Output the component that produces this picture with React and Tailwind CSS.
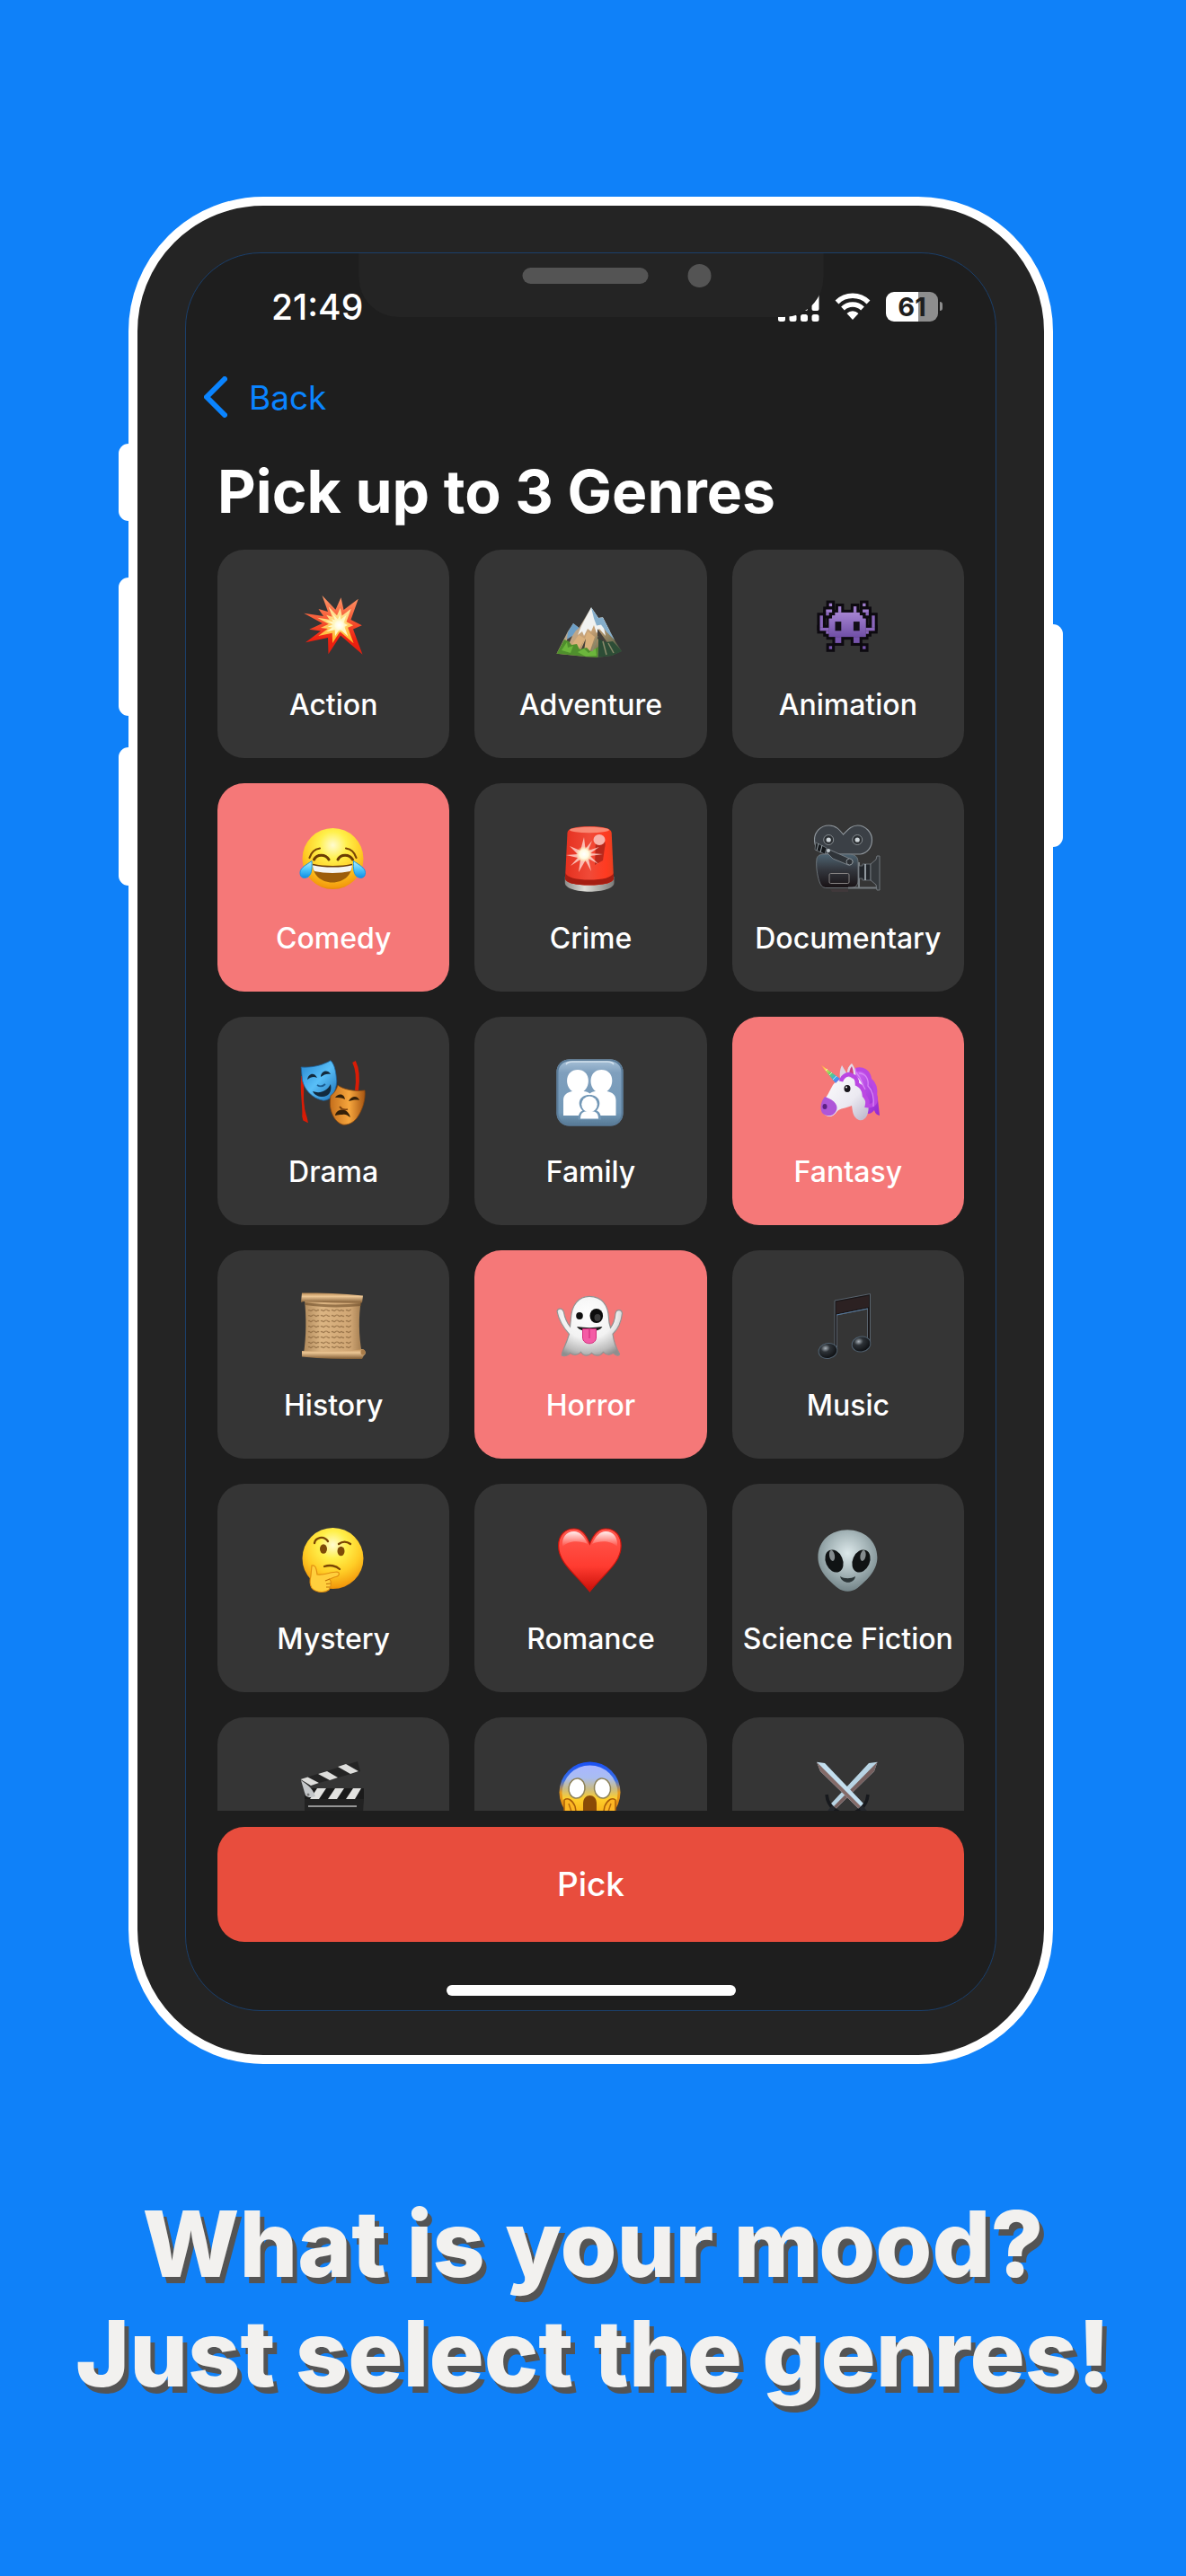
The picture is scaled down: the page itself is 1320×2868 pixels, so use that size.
import React, { useState } from "react";

function Defs() {
  return (
    <svg className="absolute size-0" aria-hidden="true">
      <defs>
        <radialGradient id="face" cx="50%" cy="28%" r="75%">
          <stop offset="0" stopColor="#fffbd0" />
          <stop offset=".3" stopColor="#fff04a" />
          <stop offset=".62" stopColor="#ffcd26" />
          <stop offset=".92" stopColor="#f39a0c" />
          <stop offset="1" stopColor="#d97b05" />
        </radialGradient>
        <linearGradient id="blast" x1="0" y1="0" x2="0" y2="1">
          <stop offset="0" stopColor="#ff9a6a" />
          <stop offset=".45" stopColor="#f5512f" />
          <stop offset=".75" stopColor="#ee2010" />
          <stop offset="1" stopColor="#e02010" />
        </linearGradient>
        <linearGradient id="blast2" x1="0" y1="0" x2="0" y2="1">
          <stop offset="0" stopColor="#ffe9a8" />
          <stop offset="1" stopColor="#ffb321" />
        </linearGradient>
        <radialGradient id="glow">
          <stop offset="0" stopColor="#fff" />
          <stop offset=".55" stopColor="#fffbe0" />
          <stop offset="1" stopColor="#fff2a0" stopOpacity="0" />
        </radialGradient>
        <linearGradient id="rock" x1="0" y1="0" x2="1" y2="1">
          <stop offset="0" stopColor="#8fb7d6" />
          <stop offset=".5" stopColor="#c9a275" />
          <stop offset="1" stopColor="#2e4a3a" />
        </linearGradient>
        <linearGradient id="purple" x1="0" y1="0" x2="0" y2="1">
          <stop offset="0" stopColor="#a583d2" />
          <stop offset="1" stopColor="#704fa6" />
        </linearGradient>
        <linearGradient id="tear" x1="0" y1="0" x2="0" y2="1">
          <stop offset="0" stopColor="#b8f0ff" />
          <stop offset=".5" stopColor="#4fc6fa" />
          <stop offset="1" stopColor="#0f8ee6" />
        </linearGradient>
        <linearGradient id="siren" x1="0" y1="0" x2="1" y2="0">
          <stop offset="0" stopColor="#e5301f" />
          <stop offset=".5" stopColor="#f04a38" />
          <stop offset=".85" stopColor="#ff3a20" />
          <stop offset="1" stopColor="#e8401f" />
        </linearGradient>
        <linearGradient id="metal" x1="0" y1="0" x2="1" y2="0">
          <stop offset="0" stopColor="#8c8c8a" />
          <stop offset=".4" stopColor="#deded9" />
          <stop offset="1" stopColor="#7c7c7a" />
        </linearGradient>
        <linearGradient id="camBody" x1="0" y1="0" x2="0" y2="1">
          <stop offset="0" stopColor="#4e6472" />
          <stop offset=".45" stopColor="#34383f" />
          <stop offset="1" stopColor="#181114" />
        </linearGradient>
        <linearGradient id="maskBlue" x1="0" y1="0" x2="1" y2="1">
          <stop offset="0" stopColor="#2585cf" />
          <stop offset=".5" stopColor="#59bff8" />
          <stop offset="1" stopColor="#1c6fb5" />
        </linearGradient>
        <linearGradient id="maskOrange" x1="0" y1="0" x2="1" y2="0">
          <stop offset="0" stopColor="#c56f1c" />
          <stop offset=".55" stopColor="#f6a63d" />
          <stop offset="1" stopColor="#a65512" />
        </linearGradient>
        <linearGradient id="famBox" x1="0" y1="0" x2="0" y2="1">
          <stop offset="0" stopColor="#a9c3d9" />
          <stop offset=".2" stopColor="#7f9fbd" />
          <stop offset=".8" stopColor="#7399b8" />
          <stop offset="1" stopColor="#557893" />
        </linearGradient>
        <linearGradient id="horn" x1="0" y1="0" x2="1" y2="1">
          <stop offset="0" stopColor="#ff7b50" />
          <stop offset=".25" stopColor="#ffe14d" />
          <stop offset=".5" stopColor="#5fd66b" />
          <stop offset=".75" stopColor="#39a6f0" />
          <stop offset="1" stopColor="#8a4be0" />
        </linearGradient>
        <linearGradient id="horse" x1="0" y1="0" x2="1" y2="1">
          <stop offset="0" stopColor="#ffffff" />
          <stop offset=".6" stopColor="#ebe9f1" />
          <stop offset="1" stopColor="#b9b3c8" />
        </linearGradient>
        <linearGradient id="mane" x1="0" y1="0" x2="1" y2="1">
          <stop offset="0" stopColor="#d56cf6" />
          <stop offset="1" stopColor="#9326cf" />
        </linearGradient>
        <linearGradient id="paper" x1="0" y1="0" x2="1" y2="0">
          <stop offset="0" stopColor="#b08a5c" />
          <stop offset=".3" stopColor="#dcb583" />
          <stop offset=".8" stopColor="#d0a674" />
          <stop offset="1" stopColor="#a37d50" />
        </linearGradient>
        <linearGradient id="roll" x1="0" y1="0" x2="0" y2="1">
          <stop offset="0" stopColor="#b98a55" />
          <stop offset=".35" stopColor="#edc795" />
          <stop offset="1" stopColor="#7f5b34" />
        </linearGradient>
        <radialGradient id="ghost" cx="48%" cy="30%" r="75%">
          <stop offset="0" stopColor="#ffffff" />
          <stop offset=".55" stopColor="#f2f2f2" />
          <stop offset=".85" stopColor="#bcbcbc" />
          <stop offset="1" stopColor="#8e8e8e" />
        </radialGradient>
        <radialGradient id="noteHead" cx="40%" cy="30%" r="70%">
          <stop offset="0" stopColor="#a9b2ba" />
          <stop offset=".35" stopColor="#2d3237" />
          <stop offset="1" stopColor="#0d0f12" />
        </radialGradient>
        <linearGradient id="heart" x1="0" y1="0" x2="0" y2="1">
          <stop offset="0" stopColor="#ff5a50" />
          <stop offset=".6" stopColor="#ff3b30" />
          <stop offset="1" stopColor="#c80f08" />
        </linearGradient>
        <linearGradient id="shine" x1="0" y1="0" x2="0" y2="1">
          <stop offset="0" stopColor="#fff" stopOpacity=".9" />
          <stop offset="1" stopColor="#fff" stopOpacity="0" />
        </linearGradient>
        <radialGradient id="alien" cx="50%" cy="38%" r="60%">
          <stop offset="0" stopColor="#dce8ea" />
          <stop offset=".55" stopColor="#a6b6b9" />
          <stop offset="1" stopColor="#76878b" />
        </radialGradient>
        <linearGradient id="scream" x1="0" y1="0" x2="0" y2="1">
          <stop offset="0" stopColor="#a9b6ff" />
          <stop offset=".22" stopColor="#a9bdf2" />
          <stop offset=".42" stopColor="#c9bb85" />
          <stop offset=".6" stopColor="#ffcf2a" />
          <stop offset="1" stopColor="#f5a010" />
        </linearGradient>
        <linearGradient id="screamEdge" x1="0" y1="0" x2="0" y2="1">
          <stop offset="0" stopColor="#1a50f5" />
          <stop offset=".3" stopColor="#3a70e8" />
          <stop offset=".5" stopColor="#e79a1c" />
          <stop offset="1" stopColor="#d97b05" />
        </linearGradient>
      </defs>
    </svg>
  );
}

const BURST =
  "25.5,5 40.5,20.7 46.5,7.3 49.5,21 65.8,8.7 57.5,32 69.8,38.3 60,42.5 70.5,70.7 46,49.5 32.5,70.3 32,52 7,57.3 24,44.5 11.2,42.7 25.8,36 5.2,24.7 27,28 21.5,20 32,23";

function Collision() {
  return (
    <>
      <polygon points={BURST} fill="url(#blast)" />
      <g transform="translate(44.5 38) scale(.62) translate(-44.5 -38)">
        <polygon points={BURST} fill="url(#blast2)" />
      </g>
      <g transform="translate(44.5 38) scale(.38) translate(-44.5 -38)">
        <polygon points={BURST} fill="#fff7c4" />
      </g>
      <circle cx="44.5" cy="38" r="8" fill="url(#glow)" />
    </>
  );
}

function Mountain() {
  return (
    <>
      <path d="M.5 69.700 13 45l6-9 6.500 5L39 18.300 47 30l5-.5 4 8 10 19 7 10.500-11 5-15 1.700-13-.5z" fill="url(#rock)" />
      <path d="M19 36l-6 10-1 8 6-4 4-6 3.500-3z" fill="#6d9fc6" />
      <path d="M39 18.300 28 39l-4 10 5-4 2 5 4-8 4 3 3-7 3 9 3-5 7 8-2-10 7 5-8-15.500-5 .5z" fill="#f1f2f0" />
      <path d="M39 18.300 47 30l5-.5 4 8 9 17-9-9-6-8-5 1-3-8z" fill="#85aecb" />
      <path d="M25 49l-7 10-4 8 9 2 9-16zM35 45l-8 20 10 4 6-18z" fill="#d9b07c" />
      <path d="M12 54l6-4-6 14zM33 53l-8 18 6-4zM46 42l10 14 8 14-9-9-9-8z" fill="#45403a" />
      <path d="M.5 69.700 9 54l5 2 3 4 6-1 3 6 8-2 5 5 8-6-1 12-13-1z" fill="#4f8f2d" />
      <path d="M6 66l6-9 1 6 6-2-3 8zM24 68l7-4 5 5 8-5 1 8-12 1z" fill="#6cb63c" />
      <path d="M47 53l8 4 8-1 10 11-11 5-15 1.700z" fill="#2d4d36" />
      <path d="M52 56l4 15M58 58l6 11M46 50l-6 17" stroke="#8b8a6b" strokeWidth="1.500" />
    </>
  );
}

const INVADER = [
  [3, 0, 1, 1], [14, 0, 1, 1],
  [6, 1, 1, 2], [11, 1, 1, 2],
  [2, 2, 2, 1], [14, 2, 2, 1], [2, 3, 1, 1], [15, 3, 1, 1],
  [5, 3, 8, 1], [4, 4, 10, 1], [3, 5, 12, 6],
  [0, 4, 1, 4], [17, 4, 1, 4], [0, 8, 3, 1], [15, 8, 3, 1],
  [2, 9, 1, 1], [15, 9, 1, 1],
  [5, 11, 2, 2], [11, 11, 2, 2],
  [3, 14, 1, 1], [14, 14, 1, 1],
];

function Invader() {
  return (
    <g transform="translate(6.5 13.700) scale(3.4)">
      {INVADER.map(([x, y, w, h], i) => (
        <rect key={i} x={x - 0.9} y={y - 0.9} width={w + 1.8} height={h + 1.8} fill="#0d0a10" />
      ))}
      {INVADER.map(([x, y, w, h], i) => (
        <rect key={i} x={x} y={y} width={w} height={h} fill={y < 3 ? "#9f7ccd" : y > 9 ? "#7754ad" : "#8a66bb"} />
      ))}
      <path d="M5 3h8v1h1v1h1v6H3V5h1V4h1z" fill="url(#purple)" />
      <rect x="5" y="6" width="2" height="3" fill="#120e17" />
      <rect x="11" y="6" width="2" height="3" fill="#120e17" />
    </g>
  );
}

function Joy() {
  return (
    <>
      <circle cx="37.500" cy="38" r="34" fill="url(#face)" />
      <path d="M11.500 37c1.500-5 5.500-9.500 11.500-10.500M63.500 37c-1.500-5-5.500-9.500-11.500-10.500" fill="none" stroke="#7a4504" strokeWidth="2.200" strokeLinecap="round" />
      <path d="M16.500 39c3-6.500 13-6.500 16.500 0M43 39c3-6.500 13-6.500 16.500 0" fill="none" stroke="#6b3c03" strokeWidth="3" strokeLinecap="round" />
      <path d="M15 44.500c13 3 32 3 44 0 0 11-9 20-22 20s-22-9-22-20z" fill="#9c5d0a" />
      <path d="M15 44.500c13 3 32 3 44 0 0 3-.7 5.500-2 7.500-12 2.500-28 2.500-40 0-1.300-2-2-4.500-2-7.500z" fill="#f4f4f2" />
      <path d="M15 44.500c13 3 32 3 44 0" fill="none" stroke="#6b3c03" strokeWidth="1.400" />
      <path d="M14 40.500C8 45 1 48 1 53.500S4.500 60 8 59c6-1.500 6.500-10 6-18.500zM60.500 40.500c6 4.500 13 7.500 13 13S70 60 66.500 59c-6-1.500-6.500-10-6-18.500z" fill="url(#tear)" stroke="#1595e8" />
    </>
  );
}

function Siren() {
  return (
    <>
      <path d="M9.800 58v7c0 6 13 9.700 27.300 9.700S64.500 71 64.500 65v-7z" fill="url(#metal)" />
      <path d="M12.500 9C13 4 22 2 37 2s24 2 24.700 7l2.300 51c0 5-12 7.500-27 7.500S10 65 10 60z" fill="url(#siren)" />
      <path d="M10.300 54c2 5 12 7.500 26.700 7.500S62 59 63.800 54l.2 6c0 5-12 7.500-27 7.500S10 65 10 60z" fill="#a51d12" />
      <ellipse cx="37" cy="6" rx="22" ry="3.300" fill="#fb9a84" opacity=".8" />
      <path d="M44 18c6-6 13 0 10 8l-2 14-9 5z" fill="#b9281b" />
      <ellipse cx="48" cy="17" rx="6.500" ry="6" fill="#f7b4ac" />
      <path d="M31 14l1.500 13L40 18l-4.500 11L48 25l-10 7 14 1-14 2 9 9-11-6 3 14-6.500-12L25 53l2-14-11 7 8-9-13-3 13-1-9-9 12 5z" fill="#ffd9d2" opacity=".8" />
      <circle cx="31" cy="33" r="9" fill="url(#glow)" />
    </>
  );
}

function MovieCamera() {
  return (
    <>
      <path d="M16.500 1C7.500 1 .5 8 .5 17s7 16 16 16h35c8-1 13-8 13-16S57.500 1 48.500 1c-7 0-11 5-16 10-4-5-8-10-16-10z" fill="#3b4046" stroke="#8e959b" strokeWidth="1.200" />
      {[16.2, 48.2].map((x) => (
        <g key={x}>
          <circle cx={x} cy="17" r="5.500" fill="#2b2f33" stroke="#858b90" strokeWidth="1" />
          <circle cx={x} cy="17" r="2.600" fill="#cfd6da" />
        </g>
      ))}
      <path d="M3 38c1-4 4-5 10-5h25c8 0 11 3 11 9v20c0 6-3 8.500-9 8.500H14c-5 0-7-3-9-10S2 44 3 38z" fill="url(#camBody)" stroke="#6f777d" strokeWidth=".9" />
      <path d="M38 70.500h35M50 42v28" stroke="#777d82" strokeWidth="2" />
      <path d="M50 46h4v-2h9v18h-9v-2h-4z" fill="#22262b" stroke="#727980" strokeWidth=".8" />
      <path d="M57 44v18" stroke="#b5bfc6" strokeWidth="1.500" />
      <path d="M63 44l6-5 1-4h3v38h-3l-1-6-6-5z" fill="#35393d" stroke="#777d82" strokeWidth=".9" />
      <rect x="17" y="54.500" width="22" height="11" rx="1.500" fill="none" stroke="#858282" />
      <path d="M18 72h20v3H20z" fill="#40383a" />
      <path d="M15 27l27 12c3 2 0 7-4 6L21 38l-6-6z" fill="#2f3439" stroke="#7e868c" strokeWidth=".9" />
      <circle cx="39.500" cy="41.500" r="3.500" fill="#2c3035" stroke="#8a9298" />
      <path d="M2 20l12 6-2 7L1 28z" fill="#15181b" stroke="#737b82" strokeWidth=".8" />
      <path d="M5 21l-2 8M9 23l-2 8" stroke="#9fa8ae" strokeWidth="1" />
      <circle cx="16" cy="29" r="2" fill="#c2cacf" />
    </>
  );
}

function Masks() {
  return (
    <>
      <path d="M3 20c3 12 0 22 2 33 0 7 3 11 4 18l-4-2-1-4c1-12-3-28-1-45z" fill="#d81c06" stroke="#d81c06" strokeWidth="1.500" />
      <path d="M61 4c4 8 5 18 3 32" fill="none" stroke="#d81c06" strokeWidth="4" />
      <path d="M2.200 10C14 11 26 8 35 2.700c5 5 6 14 6.700 23C41 38 36 47 27 47.300 14 45 6 35 3.500 25z" fill="url(#maskBlue)" stroke="#1d659f" strokeWidth=".8" />
      <path d="M9 24c1-7 8-9 11-2-4-2-7-1-11 2zM24 21c0-7 8-9 11-3-4-1-7 0-11 3zM15 37c8 3 16 0 20-8 2 9-3 14-9 14-5 0-9-2-11-6z" fill="#122a3d" />
      <path d="M20 30c3 2 6 2 9-1" fill="none" stroke="#1b5c91" strokeWidth="1.800" />
      <path d="M43 30.300c7 5 18 7 30 5.700 1 11-3 23-9 31-4 5-10 8-16 7-8-3-12-11-13.500-20-.5-4 0-8 .5-12 4-3 6-6 8-11.700z" fill="url(#maskOrange)" stroke="#8c480d" strokeWidth=".8" />
      <path d="M40 44c3-5 10-5 11 2-4-2-7-2-11-2zM55 48c3-6 10-7 12-1-4-1-8 0-12 1zM40 64c1-8 14-10 17 2-4-3-6-4-9-3-3 0-5 0-8 1z" fill="#332009" />
      <path d="M45 54c2 3 5 4 9 3" fill="none" stroke="#7b410f" strokeWidth="1.800" />
    </>
  );
}

function FamilyBox() {
  return (
    <>
      <rect x=".5" y="1.500" width="74" height="74" rx="14" fill="url(#famBox)" />
      <rect x="1.500" y="2.500" width="72" height="72" rx="13" fill="none" stroke="#5b7c99" strokeWidth="2" />
      <path d="M11 7q2-3 7-3h39q5 0 7 3" fill="none" stroke="#d5e3ee" strokeWidth="1.500" />
      <path d="M8 64V47c0-6 4-9 10-10-9-6-8-24 6-24s15 18 6.500 24c3 0 5 1 7 2.500 1.500-1.500 4-2.500 6.500-2.500-8.500-6-7.500-24 6.500-24s15 18 6 24c6 1 10 4 10 10v17z" fill="#fff" />
      <path d="M24.500 68.500c0-6 2-9 5-10-7-7-4-17.500 7.500-17.500S51.500 51.500 45 58.500c3 1 5 4 5 10z" fill="#7297b6" />
      <ellipse cx="37" cy="51.500" rx="8.800" ry="9" fill="#fff" />
      <path d="M27 67.500c0-6 3-8 6-8h8c3 0 6 2 6 8z" fill="#fff" />
    </>
  );
}

function Unicorn() {
  return (
    <>
      <path d="M42 12c10-3 20 2 21 13 5 6 7 13 8 21l2 18c-4-1-5-3-6-6-3 4-7 5-9 3 3-5 2-9 0-15L44 25z" fill="url(#mane)" />
      <path d="M31 23c5-5 14-6 18-1 5 5 6 11 7 18 5 8 6 16 3 24-2 4-5 6-9 5-7-3-7-10-8-16-7 3-13 3-16 6-4 6-9 8-14 4-4-3-5-8-3-13 5-6 8-13 12-20 2-3 6-6 10-7z" fill="url(#horse)" />
      <path d="M12 43c-4 5-6 12-3 18 5 5 12 4 15-1 4-6 0-13-12-17z" fill="#ae56d8" />
      <ellipse cx="12" cy="54" rx="2.500" ry="3" fill="#5c2083" />
      <path d="M7.300 7.300 29 23l-5 5z" fill="url(#horn)" />
      <path d="M13 14l2-2M17 19l3-3M21 24l4-4" stroke="#fff" strokeOpacity=".65" />
      <path d="M29 23c-1-6 0-11 2-15l6 10z" fill="#ddd5e4" />
      <path d="M37 21c-1-7 1-12 5-15 4 5 5 11 4 18z" fill="#e5dce9" />
      <path d="M39 20c0-5 1-8 3-11 2 5 2 9 2 13z" fill="#ca3f83" />
      <path d="M30 26c2-7 9-10 13-6 4 1 5 5 5 9 6 3 8 8 8 13 3 3 4 7 3 11 8 1 11-4 9-11 1-8-1-14-6-18-1-9-8-13-15-11" fill="none" stroke="#bb47e3" strokeWidth="4.500" />
      <path d="M50 17c8 0 11 7 10 14 5 5 7 13 6 23M47 16c7 8 6 13 10 19" fill="none" stroke="#d986f5" strokeWidth="1.300" />
      <ellipse cx="37" cy="34" rx="3.500" ry="4" fill="#17141a" />
      <circle cx="36" cy="32.500" r="1" fill="#fff" />
    </>
  );
}

function Scroll() {
  return (
    <>
      <path d="M6 9h63c-3 18-3 40 1 60H5c3-20 3-40 1-60z" fill="url(#paper)" />
      <path d="M3 1.500c22 0 45 .5 68 3l-1 8c-22 0-45-.5-65-1.500L2 12z" fill="url(#roll)" />
      <path d="M6 12c20 3 42 3 63 1v3c-20 2-42 2-62-1z" fill="#6d4c29" opacity=".6" />
      {[21, 27, 33, 39, 45, 51, 57, 62].map((y) => (
        <path key={y} d={`M10 ${y}q1-1 2 0t2 0 2-1 2 1 2 0 2 0m2 0q1-1 2 0t2 0 2-1 2 1 2 0m2 0q1-1 2 0t2 0 2-1 2 1 2 0 2 0 2 0m2 0q1-1 2 0t2 0 2-1`} fill="none" stroke="#7d5a33" strokeOpacity=".6" strokeWidth="1.200" />
      ))}
      <path d="M3 66c22 1 45 1 67-2 4 0 5 6 2 7l-2 4c-23 0-45 0-67-2.500z" fill="url(#roll)" />
      <ellipse cx="71" cy="67.500" rx="2.500" ry="3" fill="#a87b49" />
    </>
  );
}

function Ghost() {
  return (
    <>
      <path d="M37 5.300c14 0 21 10 21.500 24 0 4 1 8 2 11 4-5 5-10 5.500-16 1-5 7-5 7.500 0-1 9-4 17-10.500 23 1 8 4 16 7.500 22 0 3-4 2-7-1-4 3-7 3-11-1-4 5-9 5-13 1-4 4-9 4-12-1-4 4-8 4-12 1-2 3-6 4-9 3-2-2 4-10 8-24C7 39 3 32 1 22c1-4 6-4 7.500 1 1 6 3 11 7 16l1-10C17.500 15 25 5.300 37 5.300z" fill="url(#ghost)" stroke="#929292" strokeWidth="1.200" />
      <ellipse cx="26" cy="27" rx="3.800" ry="4" fill="#111" />
      <ellipse cx="44.800" cy="27" rx="7.300" ry="8" fill="#0c0c0c" />
      <ellipse cx="46" cy="29" rx="3.500" ry="4" fill="#3b3b3b" />
      <path d="M23 39c9 1.500 19 1.500 28.400 0-2 4-7 5-14 5s-12-1-14.400-5z" fill="#1a1a1a" />
      <path d="M29.500 41.500h15V51c0 9-15 9-15 0z" fill="#f45ba5" stroke="#d22d7c" />
      <path d="M37 42v10" stroke="#d22d7c" strokeWidth="1.200" />
    </>
  );
}

function Notes() {
  return (
    <>
      <path d="M23 10 62.500 2.500V55h-3V19L25.500 26v36H23z" fill="#191618" stroke="#59636d" strokeWidth="1" />
      <path d="M24.500 11.500 61 4.500V17l-36.500 7.500z" fill="#2c2122" />
      <path d="M25 26 60 19" stroke="#54779b" strokeWidth="1" />
      <ellipse cx="15.500" cy="66" rx="10.500" ry="8.500" fill="url(#noteHead)" stroke="#50606e" strokeWidth="1" transform="rotate(-12 15.500 66)" />
      <ellipse cx="52.500" cy="58.500" rx="10.500" ry="8.500" fill="url(#noteHead)" stroke="#50606e" strokeWidth="1" transform="rotate(-12 52.500 58.500)" />
    </>
  );
}

function Thinking() {
  return (
    <>
      <circle cx="37.500" cy="37" r="34" fill="url(#face)" />
      <path d="M17 20c1-6 10-9 15-2M44 21c4-3 9-3 13 0" fill="none" stroke="#7a4504" strokeWidth="2.300" strokeLinecap="round" />
      <ellipse cx="27" cy="26.500" rx="4" ry="5.200" fill="#7e4b08" />
      <ellipse cx="46.500" cy="29" rx="4" ry="5.200" fill="#7e4b08" />
      <path d="M28 46c6-2 13-1 17 3" fill="none" stroke="#7a4504" strokeWidth="2.300" strokeLinecap="round" />
      <path d="M14 45c3-1 5 1 6 10 8 1 15-3 22-3 4 1 3 5-3 6l-5 2c3 5 1 9-1 12-5 4-15 3-19-2-3-5-2-10-1-14z" fill="#ffcf3d" stroke="#e18f10" strokeWidth="1.200" />
      <path d="M34 60l-5 2M35 65l-5 .5M34 69l-4 0" stroke="#bf6f08" strokeWidth="1.200" />
    </>
  );
}

function Heart() {
  return (
    <>
      <path d="M37.400 21C33 9 27 4 20 4 9 4 2.600 12 2.600 23c0 20 20 32 34.800 51C52 55 72.200 43 72.200 23c0-11-6-19-17.200-19-7 0-13 5-17.600 17z" fill="url(#heart)" stroke="#cb140c" strokeWidth="1.200" />
      <path d="M20 7C11 7 6 14 7 24c9-8 20-6 28-3C31 12 26 7 20 7zM55 7c9 0 14 7 13 17-9-8-20-6-28-3C44 12 49 7 55 7z" fill="url(#shine)" />
    </>
  );
}

function Alien() {
  return (
    <>
      <path d="M37.300 5.300C55 5.300 70.400 17 70.400 36c0 16-14 27-22 34-7 5-15 5-22 0-8-7-22-18-22-34C4.400 17 19 5.300 37.300 5.300z" fill="url(#alien)" />
      <ellipse cx="22.500" cy="40" rx="9.500" ry="13" fill="#101314" transform="rotate(-24 22.500 40)" />
      <ellipse cx="52.500" cy="40" rx="9.500" ry="13" fill="#101314" transform="rotate(24 52.500 40)" />
      <ellipse cx="20" cy="34" rx="3" ry="6" fill="#c3cccf" opacity=".65" transform="rotate(-10 20 34)" />
      <ellipse cx="54.500" cy="34" rx="3" ry="6" fill="#c3cccf" opacity=".65" transform="rotate(10 54.500 34)" />
      <path d="M29 57c5 3 12 3 17 0-1 9-15 9-17 0z" fill="#2b3537" />
    </>
  );
}

function Clapper() {
  return (
    <>
      <path d="M6 33h66v12l-2 30H6z" fill="#222" />
      <path d="M6 33h66v12H6z" fill="#1a1a1a" />
      <path d="M20 33h10l-8 12H12zM40 33h10l-8 12H32zM60 33h9l-7 12H52z" fill="#e2e2e0" />
      <path d="M1.500 23 65 3l3 11L8 31z" fill="#242424" />
      <path d="M1.500 23l8-2.500L22 27l-9 3zM21 17l10-3 12 7-9 3zM43 9l9-3 14 8-9 3z" fill="#dededc" />
      <path d="M2 24c8 5 14 11 16 18-5 2-9 1-11-1z" fill="#c4c7c9" />
      <circle cx="10" cy="40" r="1.500" fill="#777" />
      <path d="M10 53h54" stroke="#bcbcbc" strokeWidth="1.500" />
    </>
  );
}

function Scream() {
  return (
    <>
      <circle cx="37.500" cy="37.500" r="34" fill="url(#screamEdge)" />
      <circle cx="37.500" cy="38.500" r="31" fill="url(#scream)" />
      <ellipse cx="23" cy="33" rx="9" ry="11" fill="#fff" stroke="#8d8157" strokeWidth="1.500" transform="rotate(8 23 33)" />
      <ellipse cx="51.500" cy="33" rx="9" ry="11" fill="#fff" stroke="#8d8157" strokeWidth="1.500" transform="rotate(-8 51.500 33)" />
      <path d="M30 62V50c0-12 15-12 15 0v12z" fill="#8a4a06" />
      <path d="M9 75V46c4-3 9 0 12 7l4 22zM66 75V46c-4-3-9 0-12 7l-4 22z" fill="#fcb623" stroke="#a95d08" strokeWidth="1.500" />
      <path d="M14 50l4 12M61 50l-4 12" stroke="#b86b0b" strokeWidth="1.500" />
    </>
  );
}

function Swords() {
  return (
    <>
      <path d="M70.500 3.700 67 14 24 56l-5-6L61 5z" fill="#b8d4e4" />
      <path d="M70.500 3.700 67 14 24 56l-2-3z" fill="#77605f" />
      <path d="M3 3.700 7 14l43 42 5-6L12 5z" fill="#c3dfef" />
      <path d="M3 3.700 7 14l43 42 2-3z" fill="#846b69" />
      <path d="M14 40c1 12 9 19 21 22M60 40c-1 12-9 19-21 22" fill="none" stroke="#17191d" strokeWidth="3.500" />
      <path d="M22 54 8 70M52 54l14 16" stroke="#24272c" strokeWidth="5" />
    </>
  );
}

const GENRES = [
  ["Action", Collision],
  ["Adventure", Mountain],
  ["Animation", Invader],
  ["Comedy", Joy],
  ["Crime", Siren],
  ["Documentary", MovieCamera],
  ["Drama", Masks],
  ["Family", FamilyBox],
  ["Fantasy", Unicorn],
  ["History", Scroll],
  ["Horror", Ghost],
  ["Music", Notes],
  ["Mystery", Thinking],
  ["Romance", Heart],
  ["Science Fiction", Alien],
];

// The row that peeks out above the Pick button shows only its icons.
const PEEKING = [
  ["TV Movie", Clapper],
  ["Thriller", Scream],
  ["War", Swords],
];

function GenreCard({ name, Icon, labelled = true, selected, onToggle }) {
  return (
    <button
      type="button"
      aria-label={name}
      aria-pressed={selected}
      onClick={onToggle}
      className={
        "flex h-[232px] min-w-0 flex-col items-center rounded-[30px] pt-[46px] " +
        (selected ? "bg-[#f57878]" : "bg-[#353535]")
      }
    >
      <svg viewBox="0 0 76 76" className="size-[76px] shrink-0" aria-hidden="true">
        <Icon />
      </svg>
      {labelled && (
        <span className="mt-[31px] text-[32px] leading-10 font-medium whitespace-nowrap">{name}</span>
      )}
    </button>
  );
}

function StatusBar() {
  return (
    <div className="flex h-[34px] items-center justify-between pr-[59px] pl-[95px]">
      <span className="text-[39px] leading-none font-medium">21:49</span>
      <div className="flex items-center gap-[17px]">
        <svg viewBox="0 0 46 34" className="h-[34px] w-[46px]" fill="#fff" aria-label="Signal">
          <rect x="0" y="26" width="8" height="8" rx="2.500" />
          <rect x="12.500" y="26" width="8" height="8" rx="2.500" />
          <rect x="25" y="26" width="8" height="8" rx="2.500" />
          <rect x="37.500" y="26" width="8" height="8" rx="2.500" />
          <rect x="25" y="12" width="8" height="10" rx="2" />
          <rect x="37.500" y="2" width="8" height="20" rx="2" />
        </svg>
        <svg viewBox="0 0 40 30" className="h-[30px] w-10" aria-label="Wi-Fi">
          <path d="M2.500 10.500a25 25 0 0 1 35 0" fill="none" stroke="#fff" strokeWidth="5.500" />
          <path d="M9 17.500a16 16 0 0 1 22 0" fill="none" stroke="#fff" strokeWidth="5.500" />
          <path d="M13.500 23a9 9 0 0 1 13 0L20 30z" fill="#fff" />
        </svg>
        <div className="flex items-center gap-[2px]">
          <div className="flex h-[33px] w-[58px] items-center justify-center rounded-[9px] bg-[linear-gradient(90deg,#fff_62%,#8e8e8e_62%)] text-[29px] leading-none font-bold text-[#1e1e1e]">
            61
          </div>
          <div className="h-[10px] w-[3px] rounded-r-full bg-[#8e8e8e]" />
        </div>
      </div>
    </div>
  );
}

function Notch() {
  return (
    <div className="absolute top-0 left-1/2 flex h-[71px] w-[517px] -translate-x-1/2 items-start justify-center rounded-b-[44px] bg-[#242424] pt-[12px] pl-[58px]">
      <div className="flex items-center gap-[44px]">
        <div className="h-[18px] w-[140px] rounded-full bg-[#545454]" />
        <div className="size-[26px] rounded-full bg-[#545454]" />
      </div>
    </div>
  );
}

export default function App() {
  const [picked, setPicked] = useState(["Comedy", "Fantasy", "Horror"]);
  const toggle = (name) =>
    setPicked((list) =>
      list.includes(name) ? list.filter((n) => n !== name) : list.length < 3 ? [...list, name] : list
    );

  return (
    <main className="min-h-screen bg-[#0f81f9] pt-[219px] pb-[120px] font-['Inter',sans-serif] text-white">
      <Defs />
      <div className="relative mr-[148px] ml-[143px] rounded-[150px] border-[10px] border-white bg-[#242424] px-[53px] pt-[52px] pb-[49px]">
        <div className="absolute top-[265px] -left-[21px] h-[86px] w-[11px] rounded-l-[11px] bg-white" />
        <div className="absolute top-[414px] -left-[21px] h-[154px] w-[11px] rounded-l-[11px] bg-white" />
        <div className="absolute top-[603px] -left-[21px] h-[154px] w-[11px] rounded-l-[11px] bg-white" />
        <div className="absolute top-[466px] -right-[21px] h-[248px] w-[11px] rounded-r-[11px] bg-white" />

        <div className="relative overflow-hidden rounded-[84px] border border-[#1b3f6b] bg-[#1e1e1e] pt-[42px] pb-4">
          <StatusBar />
          <Notch />

          <nav className="mt-[58px] flex pl-5">
            <a href="#back" className="flex h-[52px] items-center gap-[24px] text-[37px] leading-none text-[#0a84ff]">
              <svg viewBox="0 0 26 46" className="h-[46px] w-[26px]" aria-hidden="true">
                <path d="M23 3 3 23l20 20" fill="none" stroke="currentColor" strokeWidth="6" strokeLinecap="round" strokeLinejoin="round" />
              </svg>
              Back
            </a>
          </nav>

          <div className="px-[35px]">
            <h1 className="mt-[39px] text-[66px] leading-[80px] font-bold whitespace-nowrap">Pick up to 3 Genres</h1>
            <div className="mt-[25px] grid h-[1404px] grid-cols-3 content-start gap-7 overflow-hidden">
              {GENRES.map(([name, Icon]) => (
                <GenreCard key={name} name={name} Icon={Icon} selected={picked.includes(name)} onToggle={() => toggle(name)} />
              ))}
              {PEEKING.map(([name, Icon]) => (
                <GenreCard key={name} name={name} Icon={Icon} labelled={false} selected={picked.includes(name)} onToggle={() => toggle(name)} />
              ))}
            </div>
            <button type="button" className="mt-[18px] block h-32 w-full rounded-[30px] bg-[#e84d3d] text-[37px] font-medium">
              Pick
            </button>
          </div>

          <div className="mx-auto mt-12 h-3 w-[322px] rounded-full bg-white" />
        </div>
      </div>

      <h2 className="mt-[139px] text-center text-[102px] leading-[122px] font-extrabold whitespace-nowrap text-[#f2f1ef] [text-shadow:5px_7px_0_#545454]">
        What is your mood?
        <br />
        Just select the genres!
      </h2>
    </main>
  );
}
